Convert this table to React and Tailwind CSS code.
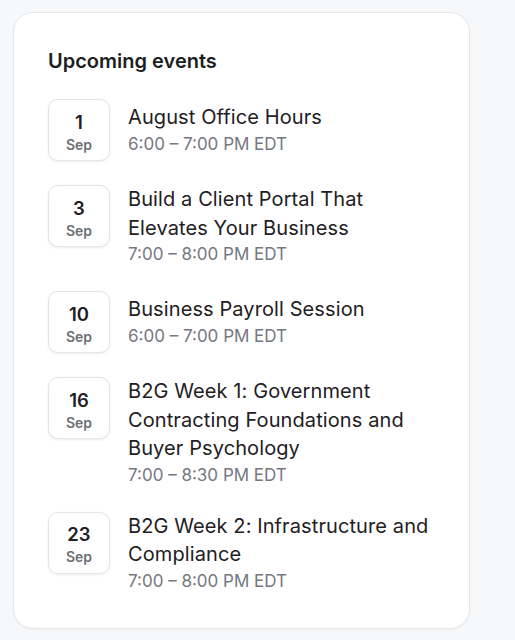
const events = [
  { day: '1', month: 'Sep', title: 'August Office Hours', time: '6:00 – 7:00 PM EDT' },
  { day: '3', month: 'Sep', title: 'Build a Client Portal That Elevates Your Business', time: '7:00 – 8:00 PM EDT' },
  { day: '10', month: 'Sep', title: 'Business Payroll Session', time: '6:00 – 7:00 PM EDT' },
  { day: '16', month: 'Sep', title: 'B2G Week 1: Government Contracting Foundations and Buyer Psychology', time: '7:00 – 8:30 PM EDT' },
  { day: '23', month: 'Sep', title: 'B2G Week 2: Infrastructure and Compliance', time: '7:00 – 8:00 PM EDT' },
];

const DateBadge = ({ day, month }) => (
  <div className="w-[62px] h-[62px] shrink-0 rounded-[10px] border border-[#e4e5e8] bg-white shadow-[0_1px_3px_rgba(0,0,0,0.08)] flex flex-col items-center justify-center pt-[4px]">
    <span className="text-[18.5px] leading-[22px] font-semibold text-[#1f2023]">{day}</span>
    <span className="text-[14px] leading-[18px] font-semibold text-[#6b6f76] mt-[3px]">{month}</span>
  </div>
);

const App = () => {
  return (
    <div className="min-h-[640px] bg-[#f7f8fa] pt-[12px] pl-[13px]" style={{ fontFamily: 'Inter, "Noto Sans", sans-serif' }}>
      <div className="w-[457px] h-[617px] bg-white border border-[#e6e7ea] rounded-[20px] shadow-[0_1px_2px_rgba(0,0,0,0.04)] px-[34px] pt-[34px]">
        <h2 className="text-[20px] leading-[28px] font-semibold text-[#1d1e21]">Upcoming events</h2>
        <ul className="mt-[24px] flex flex-col gap-[24px]">
          {events.map(ev => (
            <li key={ev.day} className="flex items-start gap-[18px]">
              <DateBadge day={ev.day} month={ev.month} />
              <div className="min-w-0 min-h-[62px] flex flex-col justify-center">
                <div className="text-[20px] leading-[28.5px] tracking-[0.1px] font-normal text-[#1f2023]">{ev.title}</div>
                <div className="text-[17px] leading-[25px] text-[#75787f]">{ev.time}</div>
              </div>
            </li>
          ))}
        </ul>
      </div>
    </div>
  );
};

export default App;
